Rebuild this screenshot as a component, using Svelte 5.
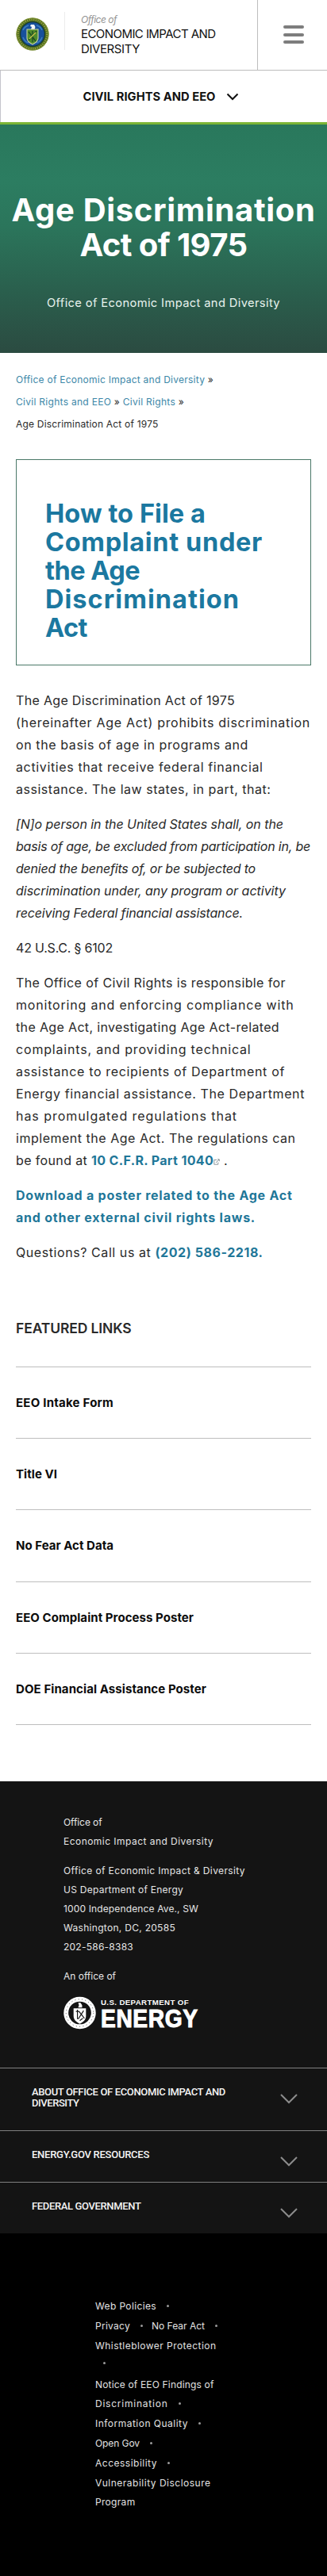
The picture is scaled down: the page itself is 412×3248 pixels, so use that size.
<script>
  // Spreads the letters of a line so that it fills the given measure.
  function fit(node, width) {
    const gap = (width - node.getBoundingClientRect().width) / node.textContent.trim().length;
    node.style.letterSpacing = gap.toFixed(3) + 'px';
  }

  const title = [['Age Discrimination', 383], ['Act of 1975', 211]];
  const howTo = [['How to File a', 202], ['Complaint under', 274], ['the Age', 119], ['Discrimination', 245], ['Act', 53]];
  const intro = [
    ['The Age Discrimination Act of 1975', 276],
    ['(hereinafter Age Act) prohibits discrimination', 371],
    ['on the basis of age in programs and', 293],
    ['activities that receive federal financial', 311.5],
    ['assistance. The law states, in part, that:', 321.5]
  ];
  const quote = [
    ['[N]o person in the United States shall, on the', 337],
    ['basis of age, be excluded from participation in, be', 371],
    ['denied the benefits of, or be subjected to', 302],
    ['discrimination under, any program or activity', 340],
    ['receiving Federal financial assistance.', 286]
  ];
  const duty = [
    ['The Office of Civil Rights is responsible for', 340],
    ['monitoring and enforcing compliance with', 350.5],
    ['the Age Act, investigating Age Act-related', 332],
    ['complaints, and providing technical', 296.5],
    ['assistance to recipients of Department of', 339],
    ['Energy financial assistance. The Department', 364],
    ['has promulgated regulations that', 279],
    ['implement the Age Act. The regulations can', 352.5]
  ];
  const featured = [
    ['EEO Intake Form', 123], ['Title VI', 52], ['No Fear Act Data', 123],
    ['EEO Complaint Process Poster', 224], ['DOE Financial Assistance Poster', 240]
  ];
  const address = [
    [['Office of', 48.5], ['Economic Impact and Diversity', 189]],
    [['Office of Economic Impact & Diversity', 229], ['US Department of Energy', 151], ['1000 Independence Ave., SW', 170], ['Washington, DC, 20585', 141], ['202-586-8383', 88]],
    [['An office of', 66]]
  ];
  const menus = [
    [['ABOUT OFFICE OF ECONOMIC IMPACT AND', 244], ['DIVERSITY', 59.5]],
    [['ENERGY.GOV RESOURCES', 148]],
    [['FEDERAL GOVERNMENT', 137.5]]
  ];
  // Each row holds the links of one line; a null entry is a separator dot.
  const legal = [
    [['Web Policies', 77], null],
    [['Privacy', 44], null, ['No Fear Act', 67], null],
    [['Whistleblower Protection', 152.5]],
    [null],
    [['Notice of EEO Findings of', 149.5]],
    [['Discrimination', 91.5], null],
    [['Information Quality', 117], null],
    [['Open Gov', 56], null],
    [['Accessibility', 78], null],
    [['Vulnerability Disclosure', 145.5]],
    [['Program', 50.5]]
  ];
  const tight = new Set([2, 4, 9]);
</script>

{#snippet lines(list)}
  {#each list as [text, width]}<span class="line" use:fit={width}>{text}</span>{/each}
{/snippet}

<header>
  <div class="brand">
    <svg class="seal" viewBox="0 0 42 42">
      <circle cx="21" cy="21" r="20.5" fill="#4f6f22" />
      <circle cx="21" cy="21" r="18.2" fill="none" stroke="#a3a545" stroke-width="2" stroke-dasharray="1.2 1.5" />
      <circle cx="21" cy="21" r="20.1" fill="none" stroke="#8c9a35" stroke-width=".9" />
      <circle cx="21" cy="21" r="15.4" fill="#17509c" stroke="#183a2a" stroke-width="1.2" />
      <path d="M9 16c1-3 4-5 7-6M33 16c-1-3-4-5-7-6M9 25c1 3 3 6 7 7M33 25c-1 3-3 6-7 7" fill="none" stroke="#3e7fc0" stroke-width="1.5" />
      <path d="M19 9h4l1.5 3-1 3h-4.5l1-3-2-1z" fill="#f2f6fa" />
      <path d="M14 15h14v11c0 4-3 6-7 8-4-2-7-4-7-8z" fill="#4f8c2a" stroke="#c9d3a0" stroke-width="1.1" />
      <path d="M16 29L26 17M16 18l9 12M21 17v14" stroke="#1d4a24" stroke-width="1.3" />
      <path d="M17 27l8-8" stroke="#d8d04c" stroke-width="1.1" />
    </svg>
    <div class="office">
      <em><span class="line" use:fit={45}>Office of</span></em>
      {@render lines([['ECONOMIC IMPACT AND', 169.5], ['DIVERSITY', 74]])}
    </div>
  </div>
  <div class="burger"><i></i><i></i><i></i></div>
</header>

<nav>
  <span class="line" use:fit={167}>CIVIL RIGHTS AND EEO</span>
  <svg width="16" height="10" viewBox="0 0 16 10"><path d="M1.5 1.5L8 8l6.500-6.500" fill="none" stroke="#111" stroke-width="2" /></svg>
</nav>

<section class="hero">
  <h1>{@render lines(title)}</h1>
  <p>{@render lines([['Office of Economic Impact and Diversity', 294]])}</p>
</section>

<main>
  <div class="crumbs">
    <span class="line" use:fit={249}><a>Office of Economic Impact and Diversity</a> »</span>
    <span class="line" use:fit={212}><a>Civil Rights and EEO</a> » <a>Civil Rights</a> »</span>
    <span class="line" use:fit={179.5}>Age Discrimination Act of 1975</span>
  </div>
  <h2>{@render lines(howTo)}</h2>
  <div class="body">
    <p>{@render lines(intro)}</p>
    <p class="quote">{@render lines(quote)}</p>
    <p>{@render lines([['42 U.S.C. § 6102', 122]])}</p>
    <p>
      {@render lines(duty)}
      <span class="line" use:fit={267}>be found at <b>10 C.F.R. Part 1040</b><svg class="ext" viewBox="0 0 8 8"><path d="M4 1.500H.8v5.700h5V4.500M3 5l4-4M5 .8h2.300v2.400" fill="none" stroke="#8d979c" stroke-width="1" /></svg> .</span>
    </p>
    <p><b>{@render lines([['Download a poster related to the Age Act', 348.5], ['and other external civil rights laws.', 302]])}</b></p>
    <p><span class="line" use:fit={311.5}>Questions? Call us at <b>(202) 586-2218.</b></span></p>
  </div>
  <h3>{@render lines([['FEATURED LINKS', 145.5]])}</h3>
  <ul class="featured">
    {#each featured as item}<li>{@render lines([item])}</li>{/each}
  </ul>
</main>

<footer>
  <div class="address">
    {#each address as group}<p>{@render lines(group)}</p>{/each}
    <div class="doe">
      <svg class="mono" viewBox="0 0 42 42">
        <circle cx="21" cy="21" r="17.700" fill="none" stroke="#fff" stroke-width="6" />
        <circle cx="21" cy="21" r="17.700" fill="none" stroke="#141414" stroke-width=".8" stroke-dasharray="1 3.500" />
        <path d="M13 15h16v10c0 5-4 8-8 10-4-2-8-5-8-10z" fill="#fff" />
        <path d="M19 8h3l2 3v3h-5l1-3z" fill="#fff" />
        <path d="M16 19l4 0M18 17v12M26 18l-7 11M20 19l7 9M21 31l4-3" stroke="#141414" stroke-width="1.200" />
      </svg>
      <div class="word">
        <small><span class="line" use:fit={111}>U.S. DEPARTMENT OF</span></small>
        <strong><span class="line" use:fit={123}>ENERGY</span></strong>
      </div>
    </div>
  </div>
  {#each menus as menu}
    <div class="menu" class:tall={menu.length > 1}>
      <div>{@render lines(menu)}</div>
      <svg width="22" height="13" viewBox="0 0 22 13"><path d="M1 1l10 10L21 1" fill="none" stroke="#8c8c8c" stroke-width="2" /></svg>
    </div>
  {/each}
</footer>

<div class="legal">
  {#each legal as row, i}
    <div class="row" class:tight={tight.has(i)}>
      {#each row as item}
        {#if item}<span class="line" use:fit={item[1]}>{item[0]}</span>{:else}<i class:first={row.length === 1}></i>{/if}
      {/each}
    </div>
  {/each}
</div>

<style>
  :global(body) { background: #fff; }
  :global(#app) { font-family: Inter, "Liberation Sans", sans-serif; color: #292929; }
  .line { display: block; width: max-content; white-space: nowrap; }
  h1, h2, h3, p, ul { margin: 0; padding: 0; }
  header { display: flex; height: 88px; border-bottom: 1px solid #bdbdbd; }
  .brand { display: flex; flex: 1; padding-left: 20px; }
  .seal { width: 42px; height: 42px; margin-top: 21.500px; }
  .office { margin: 15px 0 0 19px; padding: 2px 0 0 20px; height: 46px; border-left: 1px solid #ececec; font-size: 15px; line-height: 19px; color: #111; }
  .office em { font-size: 12px; line-height: 16px; color: #929292; display: block; }
  .burger { width: 88px; border-left: 1px solid #bdbdbd; display: flex; flex-direction: column; align-items: center; gap: 5.500px; padding-top: 32px; box-sizing: border-box; }
  .burger i { width: 26px; height: 4px; border-radius: 2px; background: #7d7d7d; margin-left: 2px; }
  nav { height: 65px; box-sizing: border-box; border-left: 1px solid #c4c4cc; display: flex; align-items: center; padding-left: 103.500px; gap: 13px; font-size: 14.700px; line-height: 20px; font-weight: 700; color: #111; }
  .hero { box-sizing: border-box; height: 291px; border-top: 3px solid #7cb536; padding-top: 86px; background: linear-gradient(#29785c 0, #2c7d61 25%, #2b755b 45%, #2a5f4d 73%, #2b4b41 100%); color: #fff; display: flex; flex-direction: column; align-items: center; }
  h1 { font-size: 40px; line-height: 44px; font-weight: 700; display: flex; flex-direction: column; align-items: center; }
  .hero p { margin-top: 39px; font-size: 14.700px; line-height: 24px; color: #e8f3ee; }
  main { padding: 20px 20px 71px; }
  .crumbs { font-size: 12px; line-height: 28px; }
  .crumbs a { color: #3c87a8; }
  h2 { box-sizing: border-box; margin-top: 30px; height: 260px; border: 1px solid #4a7868; padding: 50px 0 0 36px; font-size: 32.500px; line-height: 36px; font-weight: 700; color: #1b78a0; }
  .body { margin-top: 29.500px; font-size: 16px; line-height: 28px; display: flex; flex-direction: column; gap: 16px; }
  .body b { font-weight: 700; color: #1f7799; }
  .quote { font-style: italic; }
  .ext { width: 8px; height: 8px; }
  h3 { margin-top: 70px; font-size: 17.500px; line-height: 24px; font-weight: 600; }
  .featured { list-style: none; margin-top: 36.500px; border-bottom: 1px solid #bebebe; }
  .featured li { box-sizing: border-box; height: 90.200px; border-top: 1px solid #bebebe; padding-top: 31px; font-size: 15px; line-height: 28px; font-weight: 700; color: #0c0c0c; }
  footer { background: #141414; color: #e6e6e6; }
  .address { height: 361px; box-sizing: border-box; padding: 40px 0 0 80px; font-size: 12px; line-height: 24px; }
  .address p { margin-bottom: 13px; }
  .doe { display: flex; color: #fff; font-family: "Liberation Sans", Arial, sans-serif; }
  .mono { width: 41px; height: 42px; }
  .word { margin-left: 6px; padding-top: 2px; }
  .word small { display: block; font-size: 9.700px; line-height: 11px; font-weight: 700; }
  .word strong { display: block; font-size: 32px; line-height: 31px; font-weight: 700; -webkit-text-stroke: 1.100px #fff; transform: scaleX(.88); transform-origin: 0 0; }
  .menu { box-sizing: border-box; height: 65px; border-top: 1px solid #808080; padding: 23px 37px 0 40px; display: flex; justify-content: space-between; font-family: Roboto, "Liberation Sans", sans-serif; font-size: 13px; line-height: 14px; font-weight: 500; color: #f5f5f5; }
  .menu.tall { height: 79px; }
  .menu svg { margin-top: 9px; }
  .legal { box-sizing: border-box; height: 432px; background: #000; padding: 80px 0 0 120px; font-size: 12px; line-height: 24px; color: #e2e2e2; }
  .row { display: flex; align-items: center; height: 24px; margin-bottom: 1px; }
  .row.tight { margin-bottom: 0; }
  .row i { width: 3px; height: 3px; border-radius: 50%; background: #9a9a9a; margin: 0 11px 0 13px; }
  .row i.first { margin: -4px 0 0 10px; }
</style>
